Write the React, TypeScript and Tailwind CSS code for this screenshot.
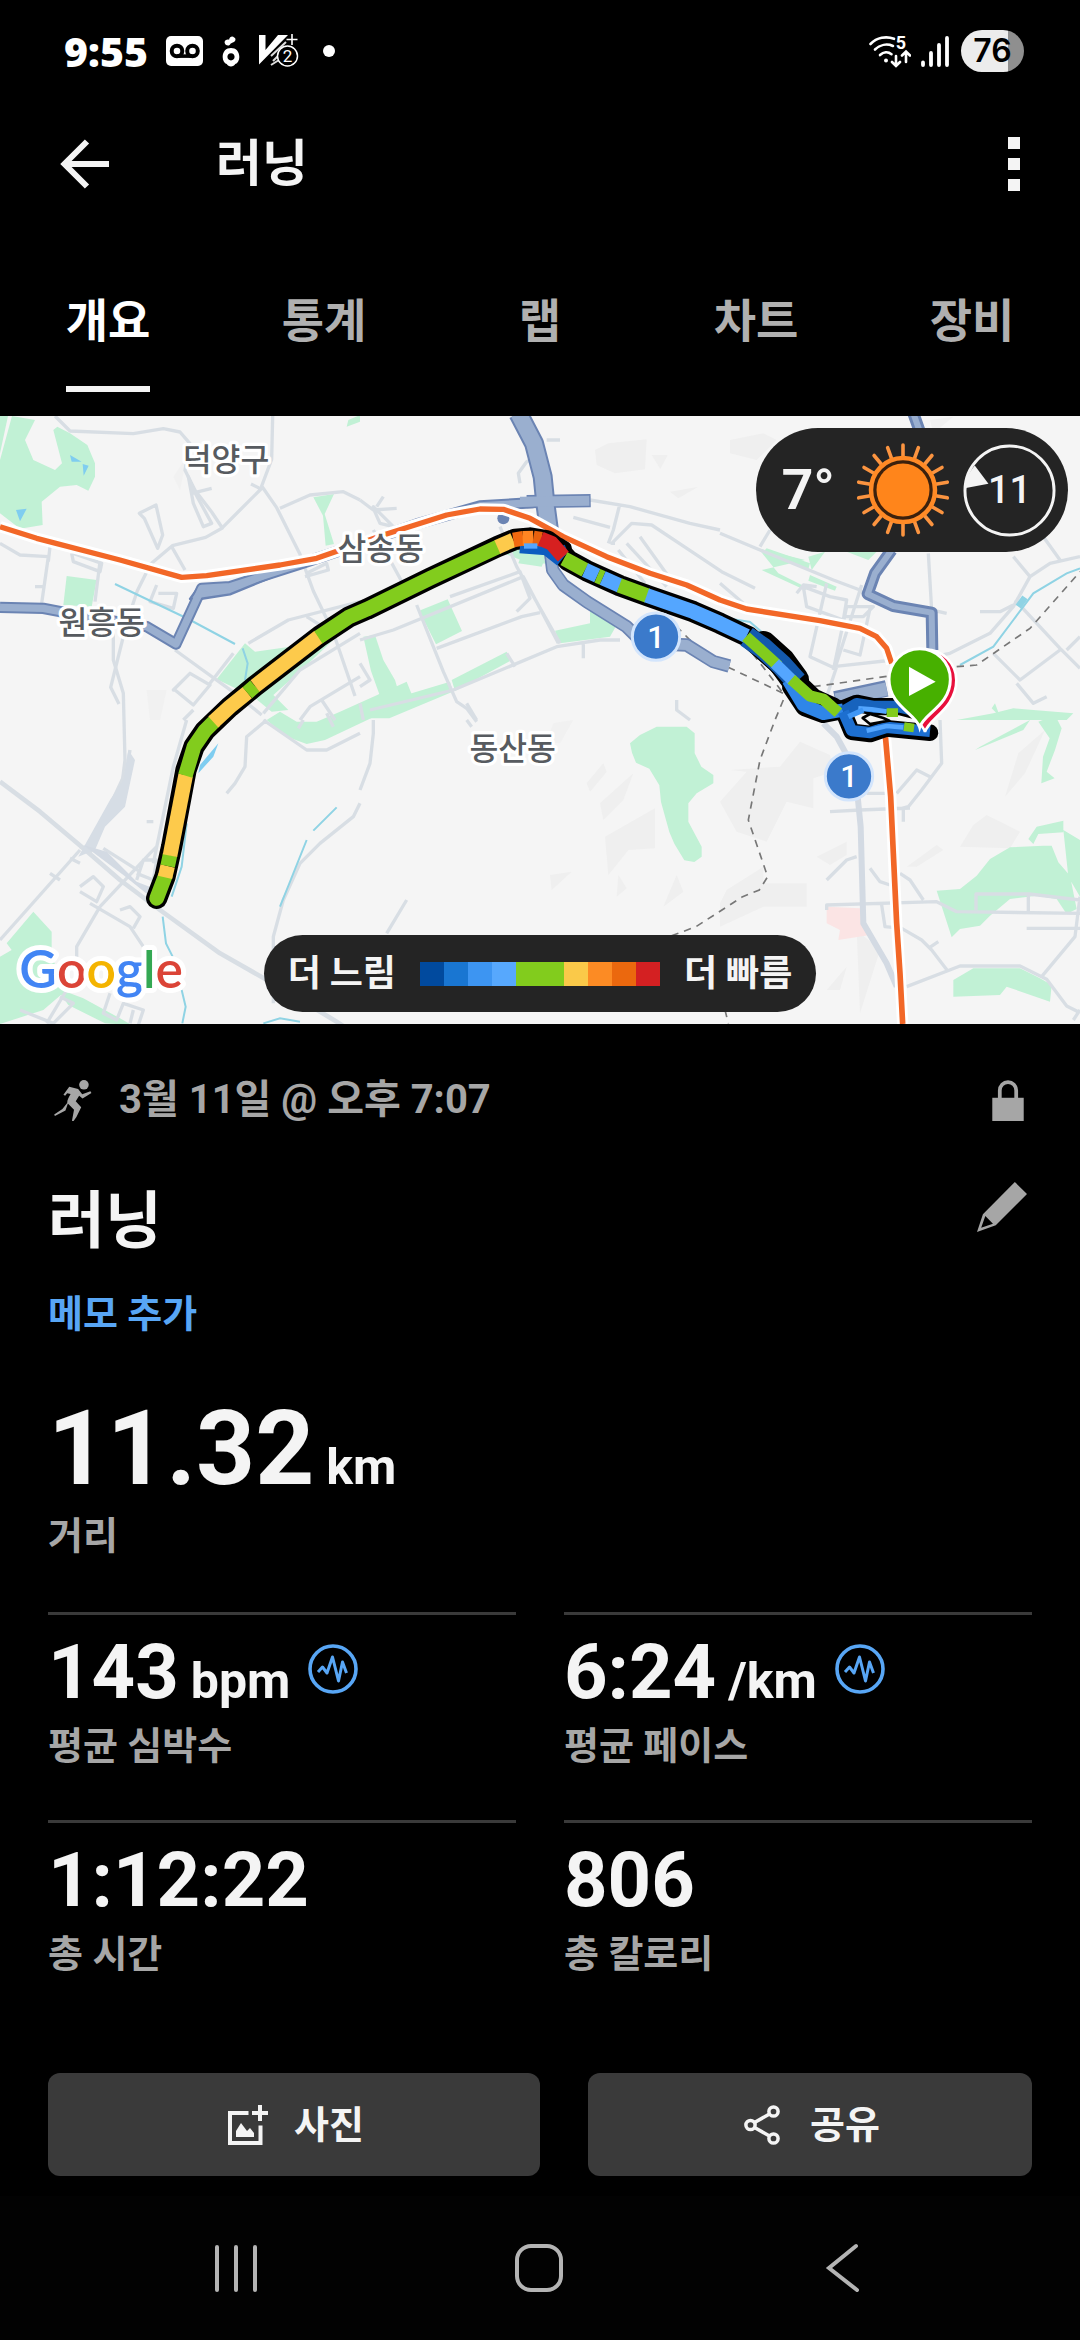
import React from "react";

const FONT = "font-['Roboto','Noto_Sans_CJK_KR',sans-serif]";

/* ---------- status bar ---------- */

function VoicemailIcon() {
  return (
    <svg viewBox="0 0 37 30" className="h-[30px] w-[37px]" aria-hidden="true">
      <rect width="37" height="30" rx="5" fill="#fff" />
      <circle cx="11" cy="15" r="5.3" fill="none" stroke="#000" strokeWidth="4" />
      <circle cx="26.500" cy="15" r="5.300" fill="none" stroke="#000" strokeWidth="4" />
      <path d="M11 20.100h15.500" stroke="#000" strokeWidth="3.600" />
    </svg>
  );
}

function CarrotIcon() {
  return (
    <svg viewBox="0 0 18 32" className="h-[31px] w-[18px]" aria-hidden="true">
      <path d="M2.600 7.600C1.600 4.600 4.600 3 7 3.800 7.600.2 11-.3 12.200 1.600c1.800.8 2 3-.2 4.600-1 .6-2.400 1-3.600 1.800C8 10.600 3.600 10.600 2.600 7.600z" fill="#fff" />
      <path fillRule="evenodd" d="M9 12.500c5 0 8.600 3.500 8.600 9.100 0 3.600-1.800 6.400-4.200 7.400-.8 1.800-2.500 2.500-4.400 2.500s-3.600-.7-4.400-2.500C2.200 28 .4 25.200.4 21.600c0-5.600 3.600-9.100 8.600-9.100zm0 5.300c-2.300 0-3.700 1.600-3.700 3.700s1.400 3.700 3.700 3.700 3.700-1.600 3.700-3.700-1.400-3.700-3.700-3.700z" fill="#fff" />
    </svg>
  );
}

function VaccineIcon() {
  return (
    <svg viewBox="0 0 40 34" className="h-[34px] w-10" aria-hidden="true">
      <path d="M0 1h6.500v15L19 1h10L0 30.500z" fill="#fff" />
      <path d="M12 22l15-14M14 27l8-8M12 31l8-5" stroke="#ddd" strokeWidth="2" />
      <path d="M33 0v11M27.500 5.500h11" stroke="#fff" strokeWidth="1.600" />
      <circle cx="28.500" cy="22" r="10" fill="#000" stroke="#fff" strokeWidth="1.500" />
      <text x="28.500" y="28" textAnchor="middle" fontSize="17" fill="#fff" fontFamily="Roboto, sans-serif">2</text>
    </svg>
  );
}

function WifiIcon() {
  return (
    <svg viewBox="0 -5 42 43" className="h-[43px] w-[42px]" aria-hidden="true">
      <g fill="none" stroke="#fff" strokeWidth="2.600" strokeLinecap="round">
        <path d="M1.500 9C8 2.500 17 .800 25 3.800" />
        <path d="M6 14.500C11 9.600 18 8.400 24 11" />
        <path d="M11 20c3.500-3.200 8-3.600 11.500-.800" />
        <path d="M27 21v9.500M23 27l4 4 4-4M37 27v-9.500M33 20.500l4-4 4 4" />
      </g>
      <circle cx="17" cy="25.500" r="2" fill="#fff" />
      <text x="32" y="13.500" textAnchor="middle" fontSize="18" fontWeight="700" fill="#fff" fontFamily="Roboto, sans-serif">5</text>
    </svg>
  );
}

function StatusBar() {
  return (
    <div className="flex h-[102px] items-center justify-between pl-16 pr-14 text-white">
      <div className="flex items-center">
        <span className="font-['Open_Sans',sans-serif] text-[41px] font-extrabold leading-[48px]">9:55</span>
        <div className="ml-[18px] flex items-center gap-[19px]">
          <VoicemailIcon />
          <CarrotIcon />
          <VaccineIcon />
        </div>
        <span className="ml-6 size-3 rounded-full bg-white" />
      </div>
      <div className="flex items-center gap-[10px]">
        <WifiIcon />
        <svg viewBox="0 0 28 31" className="mr-[2px] h-[31px] w-7" aria-hidden="true">
          <path d="M2 26.500v2.500M10 17v12M18 9v20M26 2v27" stroke="#fff" strokeWidth="3.800" strokeLinecap="round" />
        </svg>
        <span className="flex h-[42px] w-[63px] items-center justify-center rounded-full bg-[linear-gradient(90deg,#ececec_75%,#8f8f8f_75%)] font-['Inter',sans-serif] text-[32px] font-semibold leading-none text-black">
          76
        </span>
      </div>
    </div>
  );
}

/* ---------- header and tabs ---------- */

function Header() {
  return (
    <header className="flex h-[124px] items-center pl-[60px] pr-[50px] text-[#f4f4f4]">
      <button aria-label="뒤로" className="mr-[106px]">
        <svg viewBox="0 0 50 50" className="size-[50px]">
          <path d="M27 2.500L4.500 25 27 47.500M5 25h44" fill="none" stroke="#f4f4f4" strokeWidth="6" />
        </svg>
      </button>
      <h1 className="text-[50px] font-bold leading-[64px]">러닝</h1>
      <button aria-label="더보기" className="ml-auto flex flex-col gap-[9px] px-[10px]">
        <span className="size-3 bg-[#f4f4f4]" />
        <span className="size-3 bg-[#f4f4f4]" />
        <span className="size-3 bg-[#f4f4f4]" />
      </button>
    </header>
  );
}

function Tabs() {
  const tabs = ["개요", "통계", "랩", "차트", "장비"];
  return (
    <nav role="tablist" className="grid grid-cols-5 pb-6 pt-[67px]">
      {tabs.map((tab, i) => (
        <button
          key={tab}
          role="tab"
          aria-selected={i === 0}
          className={
            i === 0
              ? "flex flex-col items-center text-[46px] font-bold leading-[56px] text-white"
              : "flex flex-col items-center text-[46px] font-bold leading-[56px] text-[#b0b0b0]"
          }
        >
          <span className={i === 0 ? "border-b-6 border-[#f4f4f4] pb-[37px]" : "pb-[43px]"}>{tab}</span>
        </button>
      ))}
    </nav>
  );
}

/* ---------- map ---------- */

type Segment = [string, string];

const ROUTE_OUTLINE =
  "M470 1465L495 1400 515 1310 558 1080 582 1010 615 962 690 890 765 828 960 678 1045 622 1100 598 1290 505 1492 410 1545 388 1590 384 1640 392 1672 415 1705 452 1760 482 1860 527 1945 558 2080 605 2160 640 2245 680 2330 755 2385 815 2440 868 2500 895";

const ROUTE: Segment[] = [
  ["#82cc1d", "M470 1465L495 1400"],
  ["#fdca4b", "M495 1402L503 1368"],
  ["#82cc1d", "M503 1368L510 1335"],
  ["#fdca4b", "M510 1337L557 1095"],
  ["#82cc1d", "M556 1097L582 1010 615 962 645 932"],
  ["#fdca4b", "M640 936L690 890 742 848"],
  ["#82cc1d", "M742 848L765 828"],
  ["#fdca4b", "M765 828L957 680"],
  ["#82cc1d", "M955 682L1045 622 1100 598 1290 505 1495 410"],
  ["#fdca4b", "M1492 411L1540 390"],
  ["#f2690f", "M1540 390L1570 385"],
  ["#ff8522", "M1568 385L1600 384"],
  ["#e8610d", "M1600 384L1625 388"],
  ["#d62020", "M1622 386L1655 400 1690 440"],
  ["#82cc1d", "M1692 446L1755 480"],
  ["#54a6ff", "M1755 480L1792 497"],
  ["#82cc1d", "M1792 497L1808 504"],
  ["#54a6ff", "M1808 504L1860 527"],
  ["#82cc1d", "M1858 526L1942 557"],
  ["#54a6ff", "M1940 556L2080 605 2160 640 2240 678"],
];

const TRUNK_WEST = "M0 592L130 595 250 618 440 650 528 702 605 535 690 530 900 462 1080 402 1250 342 1440 288 1600 278";
const TRUNK_NORTH = "M1555 10L1602 100 1628 200 1636 280 1652 400";
const TRUNK_SOUTH = "M1652 430L1658 480 1690 525 1760 575 1880 650 1930 700 2060 705 2140 755 2188 768";
const TRUNK_EAST = "M2740 10L2765 80M2675 420L2625 490 2603 552 2680 588 2795 608 2797 720";

const METRO_WEST =
  "M0 350L110 385 360 450 545 502 620 497 840 465 950 445 1080 400 1150 375 1340 315 1440 297 1510 298 1590 325 1690 380 1820 440 1950 490 2060 525 2160 570 2240 597 2460 632 2580 655 2630 680 2660 715 2675 760";
const METRO_SOUTH = "M2655 965L2672 1160 2680 1330 2690 1540 2700 1690 2708 1842";

function Shield({ x, y }: { x: number; y: number }) {
  return (
    <g>
      <circle cx={x} cy={y} r="71" fill="#3b7acb" stroke="#d3e5fc" strokeWidth="9" />
      <text x={x} y={y + 33} textAnchor="middle" fontSize="92" fontWeight="500" fill="#fff" fontFamily="Roboto, sans-serif">
        1
      </text>
    </g>
  );
}

function PlaceLabel({ x, y, children }: { x: number; y: number; children: string }) {
  return (
    <text x={x} y={y} textAnchor="middle" fontSize="94" fontWeight="500" fill="#575b60" stroke="#fff" strokeWidth="20" strokeLinejoin="round" paintOrder="stroke" fontFamily="'Noto Sans CJK KR', sans-serif">
      {children}
    </text>
  );
}

function MapCanvas() {
  return (
    <svg viewBox="0 18 3240 1824" className="block w-full" role="img" aria-label="러닝 경로 지도">
      <rect y="18" width="3240" height="1824" fill="#f5f5f5" />

      {/* terrain shading */}
      <g fill="#efefef">
        <path d="M1785 120l40-20 115-12-5 90-90 12-55-25z M1955 135h48l-22 42z M2010 245l85-15-60 35z" />
        <path d="M2190 90l100-20 40 20-60 60-80-20z M2790 30l70-10-60 50z" />
        <path d="M1760 1120l50-60 10 25-50 60z M1800 1180l100-90-30 80-60 60z M1815 1280l150-85v120l-80 5-60 75z M1650 1395l65-10-60 55z M1855 1395l25 40-30 25z M2030 1395l20 50-60 45z" />
        <path d="M2190 1080l150-10 60-75 90 40 10 50-60 20v90l-80-20-60 120-90-30-50-90 80-90z M2450 1340l90-45v40l-50 30z M2180 1440l110-70v50h130v70h-130l-130 60v-70z" />
        <path d="M2880 1310l40-65 40-30 100 50-30 50z M3015 1160l40-130 80-70-60 130z M2570 1560l70 60-60 190z M2480 1740l60-70-20 70z M2720 1370l90-65 20 15-80 50z" />
        <path d="M1660 940l60-10-40 70-40-5z M440 840h60l-20 90h-30z M520 200l40-60-20 100z" opacity=".6" />
      </g>

      {/* parks */}
      <g fill="#c1f1d5">
        <path d="M0 18H24L0 130z M36 18L105 30 75 90 100 150 165 180 186 160 160 60 172 50 210 70 262 105 285 160 285 200 265 242 230 225 180 230 125 275 128 345 60 356 0 310V150z" />
        <path d="M200 498l90 12-15 80-85-5z M940 262l62-10-28 60 28 90-25 5-8-90z M1045 30l35-15v20l-40 15z" />
        <path d="M650 808L735 700 765 725 870 710 1085 580 1150 550 1490 400 1600 430 1650 462 1580 457 1490 422 1310 512 1180 572 1090 630 1010 680 910 775 820 855 865 900 815 905 760 860z" />
        <path d="M1565 432h75l-15 38-70-10z M1263 600l80-32 43 95-78 40-50-100z M1355 810l165-85 10 28-165 90z M1090 680l35-5 25 75 35 60 15 50 150-45 8 30-190 80h-60l-15-40 45-32-25-70z M1665 662L1770 640V585L1850 645 1830 680 1680 700z" />
        <path d="M800 930l60 50 60 22 55-12 265-125-20-50-200 90-70 30-60 0-50-30z" />
        <path d="M2275 415l140 35-130 30 130 60 10-5-90-45z M2430 495l80 35-5 12-80-30z M2540 425h90l-25 25z" />
        <path d="M2300 415L2430 460 2425 478 2290 425z M2425 440l50-15-40 55z" />
        <path d="M1890 1000l30-25 50-25h90l24 20 0 60 20 40 36 25v25l-50 30-25 30v55l40 75 0 30-22 16-30-5-30-50-15-35-25-90-5-50-30-50-40-18-12-30z" />
        <path d="M100 1505L155 1565V1640L200 1740 130 1800 0 1842V1640L35 1620 20 1600z M170 1735l80 30 110 60 35 20-80-5-110-55z" />
        <path d="M2980 910L3040 895 3100 900 3220 910 3200 930H2870z M2940 1010l150-80-20 30-145 60z M3115 935l50-20 20 40-20 65-25 65 24 20-40 15 5-80 20-55z" />
        <path d="M2810 1442l70-5 50-40 40-50 60-35 100-5 25 0 20 50 35 40 20 100-30 15-30-45-60-10-80 10-60 50-30 30-60 10-25 25z M3110 1250l80-18v35l-75 5-15 30-15-15z M3190 1260l50 30v170l-35-60z" />
        <path d="M2860 1710l60-35h140l60 30 35 20-5 50-130-45-20 25-140 5z M2975 895l10-15 15 40z" />
      </g>
      <path d="M2480 1490l100 5 30 80-95 15 5-30-40-20z" fill="#fbe4e4" />

      {/* local roads */}
      <g fill="none" stroke="#d8dee4" strokeWidth="10" strokeLinejoin="round">
        <path d="M165 18l45 45 190 8 90-15 50 10 30 35-15 80 30 60 50 65 32 48-50 28-100 25-65 55-40 80-30 90-30 120-20 80 25 50" />
        <path d="M818 18l-3 130-30 80 45 65 70 140 40 110 60 125 65 190 M668 352l115-115-30-15 M565 200l15 80 30 70 25-10-60-110z M575 250l60-15 M840 295l90-40 100-10 50 25" />
        <path d="M418 310l50-25 20 90-15 40-40-90z M0 400l60 35 85 5-20 140 M150 410l-5 45 M215 430l5 25 80 30 5-25-85-30 M300 455l-15 120 M105 530h30 M515 410l40 70 M475 550l55 0-10 45-70-20 20-50" />
        <path d="M745 700l120-70 215-55 M525 720l180 130 80 65 M520 840l50-50 60 35-50 60-55-45z M630 820l70-90 M580 900l-30 30 M340 670l0 80 30 100 5 200-15 120-100 145 M1080 670L900 780 790 910 M900 930l30-40 150-90 M965 870l40 60 M920 620l40 25 M915 500l70-20-5-20-60 30" />
        <path d="M1080 690l100-30 390-160 105 200 M1080 880l10 50 M1250 585l80 200 40 90 30 20 30 40 M1310 715l255-95 55-12 M1350 560l210-75 30 80-40 40 M1500 350l50 120 130 230 M1230 560l-60-110-50-90 M1080 270l40 30 70-5 M1120 290l60 60-40-10-20-45z M1150 260l-20 30 M1560 220l-5-30 25-35 40-20 M1640 90l40 0 M1080 760l30 50-30 20" />
        <path d="M1110 900l250-60 310-130 130-20 60 0 M1750 700v45 M1520 730l25 40 M1400 880l30 50 M1860 280l-20 80-15 40 M1720 322l110 30 M1845 400l-10 0 60-60 60 5 120 80 90 60 100 50 M1880 400l120 130 M1855 420l80 100 M1920 380l100 140 M2030 870v30l40 30 M1770 270l120 20 180 50 90 20" />
        <path d="M2160 370l120 50 220 90 80 30 10 10 M2160 520l70 60 M2310 360l-30 50 M2410 530l80 30 50 10-10 60-110-40z M2480 520l-50 220 75 35 80-250 M2390 550l20-25 40 5 M2500 780l40-190 80 0-30 30-60 0 M2500 770l180-20 M2530 720l50 15 30-140 M2510 770l-30 90 M2785 430l10 170 45 10 M3040 440l50 60-50 90-70 80-120 60-50 10 M3130 380l50 70 M2940 605l60 0 40-20 M3090 500l60 -40 90-20 M3045 570l135 145 60 60 M3180 720l-120 90-80-80 M3050 820l50 60 40-20 M3240 680l-40 40" />
        <path d="M0 1115l120 90 130 110 110 95 120 90 180 130 150 85 200 120 60 40" strokeWidth="14" />
        <path d="M240 1310l30 20 40-100 70-150 10-60 M560 930l-40 140-60 290 M0 1590l240-270 M240 1430l40-30 30 30-20 45-50-30 M150 1390l30 20 M210 1345l30 15 M310 1315l110 70 M300 1490l150-160 20-20 M270 1480l120 70 40 60 M360 1500l30-10 30 30-20 35 M410 1410l20-60 40 0-10 60-50-20 M300 1490l-70 120 0 40 M440 1235l20 0 M800 930l-60 50-5 90-30 50-25 30 M1080 1180l-20 40-100 80-60 60-50 110-30 110v200 M790 930l130 90 60 0 100-50 M910 930l-15 25 M980 910l20 40 M1120 930l0 40-10 90-30 80 M1220 1470l-60 100 M1400 930l15 20" />
        <path d="M200 1740l-60 100 M60 1800l100 40 60-60-40-20 M330 1750l-20 60 40 20 20-50 60 20-20 60 M400 1800l-10 40 M2820 930l5 130-60 80-40 50-20 5 M2490 1205l90-5 150-6 M2600 1150l60 0 M2690 1150l60-70 40 20 M2710 1195l0 40 M2570 1340l-30 10-60 60 M2610 1375l30 40 30 10 M2700 1390l30 20 40 60 M2480 1500l0-15 330-10 60 30 370 5 M2928 1500v-48l160 0 152 18 M3085 1455v50 M3240 1460l-15 120-100 120 M3080 1555h160 M2645 1485l10 65 50 5 60 35 30 30 50 65 M2785 1615l30-20 M2720 1730l160-62 180 0 80 40 60 80 40 20 M3220 1830l20-30" />
      </g>
      <path d="M2470 940L2510 980 2565 1080 2582 1250 2590 1540 2660 1660 2690 1730" fill="none" stroke="#d3dae3" strokeWidth="18" />
      <path d="M330 1170l40-60 15-90 20 30-30 140-60 60-30 70-50 20z" fill="#d6dde5" />
      <path d="M250 1305l120 90 100 80-10-40-50-20-90-90z" fill="#d3dae3" />

      {/* water */}
      <g fill="none" stroke="#8fd3e4" strokeWidth="6">
        <path d="M345 522l220 105 140 75 M728 715l15 45-8 50" />
        <path d="M1010 1192l-70 70 M920 1290l-60 150-20 50 M488 1520l10 80 20 40 M545 1740l12 50-10 50 M560 1240l-15 130-30 90 M790 1840l50-15 60 10" />
        <path d="M1900 530l90 20 90 35 80 25 40 18 50 8 35 30 40 65 60 50 30 60 50 5 M2880 765l100-55 60-80 60-80 100-60 40-15" />
        <path d="M3055 590l20-28" strokeWidth="20" />
      </g>
      <path d="M210 135l35 20-30 0z M248 162l18 5-15 30z M48 300l32-4-20 38z M600 1065l55-65-15 40-45 50z" fill="#7fcdf0" />

      {/* administrative borders */}
      <g fill="none" stroke="#777" strokeWidth="5" strokeDasharray="22 18">
        <path d="M2000 620l70 70 90 70 200 95 M2170 650l80 70 100 130 M2350 870l-25 60-45 120-35 180 58 170-25 40-50 20-140 90-80 30 M2440 830l250-35 M2870 770l60-5 160-110 150-170" />
        <path d="M2175 1800l10 40" />
      </g>

      {/* trunk roads */}
      <g fill="none" strokeLinejoin="round">
        <g stroke="#6b84b3">
          <path d={TRUNK_WEST} strokeWidth="34" />
          <path d={TRUNK_NORTH} strokeWidth="60" />
          <path d="M1580 275L1772 272" strokeWidth="40" />
          <path d={TRUNK_SOUTH} strokeWidth="40" />
          <path d={TRUNK_EAST} strokeWidth="36" />
          <path d="M2505 868L2660 835" strokeWidth="50" />
        </g>
        <path d="M600 525h80l260-75 60-10-120 35-190 78-90 14-30 0z" fill="#9aafcf" stroke="#6b84b3" strokeWidth="7" />
        <g stroke="#9aafcf">
          <path d={TRUNK_WEST} strokeWidth="22" />
          <path d={TRUNK_NORTH} strokeWidth="48" />
          <path d="M1560 275L1768 272" strokeWidth="30" />
          <path d={TRUNK_SOUTH} strokeWidth="30" />
          <path d={TRUNK_EAST} strokeWidth="18" />
          <path d="M2508 870L2660 837" strokeWidth="40" />
        </g>
        <circle cx="1510" cy="325" r="18" fill="#6b84b3" />
      </g>

      {/* metro line */}
      <g fill="none" strokeLinejoin="round">
        <path d={METRO_WEST} stroke="#fff" strokeWidth="34" />
        <path d={METRO_SOUTH} stroke="#fff" strokeWidth="34" />
        <path d={METRO_WEST} stroke="#f26727" strokeWidth="16" />
        <path d={METRO_SOUTH} stroke="#f26727" strokeWidth="17" />
      </g>

      {/* recorded route */}
      <g fill="none" strokeLinejoin="round" strokeLinecap="round" stroke="#000">
        <path d={ROUTE_OUTLINE} strokeWidth="64" />
        <path d="M1682 402L1698 412 1700 445" strokeWidth="34" />
        <path d="M2290 705L2345 755 2385 810" strokeWidth="84" />
        <path d="M2375 830L2415 890 2470 910 2520 900" strokeWidth="58" />
        <path d="M2520 900L2570 880 2620 890 2700 890 2740 900" strokeWidth="52" />
        <path d="M2530 905L2555 965 2610 972 2660 955 2790 968" strokeWidth="50" />
      </g>
      <g fill="none" strokeLinejoin="round">
        <path d="M1560 408l80 6 45 35" stroke="#0b5cc0" strokeWidth="44" />
        <path d="M1684 408l10 26" stroke="#0a4a9e" strokeWidth="22" />
        <path d="M2240 680L2290 715 2345 765 2390 815" stroke="#1459ad" strokeWidth="64" />
        <path d="M2365 810L2410 885 2470 910 2530 900" stroke="#2f86e8" strokeWidth="40" />
        <path d="M2530 905L2570 882 2620 890 2700 890 2740 900" stroke="#1763bd" strokeWidth="36" />
        <path d="M2530 905L2555 962 2610 968 2660 952 2790 964" stroke="#1d6fd0" strokeWidth="34" />
        <path d="M2575 895L2615 898 2660 905 M2600 962L2660 948 2710 952" stroke="#54a6ff" strokeWidth="14" />
        <path d="M2545 920L2590 900" stroke="#3f96f5" strokeWidth="16" />
        {ROUTE.map(([color, d], i) => (
          <path key={i} d={d} stroke={color} strokeWidth="44" strokeLinecap={i === 0 ? "round" : "butt"} />
        ))}
        <path d="M2238 680L2285 722 2335 768" stroke="#82cc1d" strokeWidth="34" />
        <path d="M2325 760L2378 812" stroke="#54a6ff" strokeWidth="34" />
        <path d="M2374 808L2430 858 2470 868 2515 908" stroke="#82cc1d" strokeWidth="34" />
        <path d="M2660 908l34 0 M2712 950l30 4" stroke="#82cc1d" strokeWidth="26" />
        <path d="M1572 408l40 0" stroke="#54a6ff" strokeWidth="16" />
        <path d="M2588 924L2610 912 2650 924 2668 932 2610 942z" fill="#f5f5f5" stroke="#000" strokeWidth="8" />
      </g>

      <Shield x={1968} y={680} />
      <Shield x={2547} y={1099} />

      {/* finish and start pins */}
      <path d="M2775 966c-10-40-90-70-90-155a92 92 0 0 1 184 0c0 85-84 115-94 155z" fill="#e8103c" stroke="#fff" strokeWidth="8" />
      <path d="M2759 952c-12-42-92-64-92-144a92 92 0 0 1 184 0c0 80-80 102-92 144z" fill="#47b000" stroke="#fff" strokeWidth="9" />
      <path d="M2727 770v88l80-43z" fill="#fff" />

      <PlaceLabel x={678} y={183}>덕양구</PlaceLabel>
      <PlaceLabel x={1142} y={450}>삼송동</PlaceLabel>
      <PlaceLabel x={305} y={671}>원흥동</PlaceLabel>
      <PlaceLabel x={1538} y={1050}>동산동</PlaceLabel>

      <text x="58" y="1735" fontSize="155" fontWeight="600" fontFamily="Lato, sans-serif" stroke="#fff" strokeWidth="30" strokeLinejoin="round" paintOrder="stroke">
        <tspan fill="#4285f4">G</tspan>
        <tspan fill="#db4437">o</tspan>
        <tspan fill="#f4b400">o</tspan>
        <tspan fill="#4285f4">g</tspan>
        <tspan fill="#34a853">l</tspan>
        <tspan fill="#db4437">e</tspan>
      </text>
    </svg>
  );
}

function SunIcon() {
  const rays = Array.from({ length: 18 }, (_, i) => i * 20);
  return (
    <svg viewBox="-48 -48 96 96" className="size-24" role="img" aria-label="맑음">
      {rays.map((a) => (
        <path key={a} d="M0-33V-45" transform={`rotate(${a})`} stroke="#fb9440" strokeWidth="3.600" strokeLinecap="round" />
      ))}
      <circle r="32" fill="#3c210d" stroke="#ff8a26" strokeWidth="4.500" />
      <circle r="26.500" fill="#ff851b" />
    </svg>
  );
}

function WeatherPill() {
  return (
    <div className="absolute right-3 top-3 flex h-[124px] items-center rounded-full bg-[#242424] pl-[25px] pr-3">
      <span className="mr-[20px] text-[56px] font-semibold leading-[64px] text-[#f4f4f4]">7°</span>
      <SunIcon />
      <div className="relative ml-3 flex size-[93px] items-center justify-center">
        <svg viewBox="0 0 95 95" className="absolute inset-0 size-full" aria-hidden="true">
          <circle cx="47.500" cy="47.500" r="45.500" fill="none" stroke="#f4f4f4" strokeWidth="3" />
          <path d="M12 22l14 18.500L3 45c0-9 3-16 9-23z" fill="#f4f4f4" />
        </svg>
        <span className="text-[38px] font-medium leading-[44px] text-[#f4f4f4]">11</span>
      </div>
    </div>
  );
}

function PaceLegend() {
  return (
    <div className="absolute inset-x-0 bottom-3 flex justify-center">
      <div className="flex h-[77px] items-center gap-6 rounded-full bg-[#242424] px-6 text-[36px] font-bold leading-[48px] text-[#f4f4f4]">
        <span>더 느림</span>
        <div className="flex h-6">
          <span className="w-6 bg-[#014a9e]" />
          <span className="w-6 bg-[#1976d2]" />
          <span className="w-6 bg-[#3d95f2]" />
          <span className="w-6 bg-[#57a8fd]" />
          <span className="w-12 bg-[#82cc1d]" />
          <span className="w-6 bg-[#fac949]" />
          <span className="w-6 bg-[#fc8b24]" />
          <span className="w-6 bg-[#eb680e]" />
          <span className="w-6 bg-[#d42022]" />
        </div>
        <span>더 빠름</span>
      </div>
    </div>
  );
}

/* ---------- activity details ---------- */

function RunnerIcon() {
  return (
    <svg viewBox="0 0 110 120" className="h-[41px] w-[38px]" aria-hidden="true">
      <circle cx="87" cy="14" r="14" fill="#a6a6a6" />
      <path d="M44 20l26 6 12 16 24-9 3 5-26 16-10-8-10 16 16 18-14 28-9 13-4-2 6-32-18-18-7 20L2 105l-2-4 24-16 14-18c0-8 4-16 10-26l-10-2-6 7-5-3z" fill="#a6a6a6" />
    </svg>
  );
}

function PulseButton({ label }: { label: string }) {
  return (
    <button aria-label={label} className="ml-[18px] mt-[16px] self-start">
      <svg viewBox="0 0 50 50" className="size-[50px]" fill="none" stroke="#58a6f5">
        <circle cx="25" cy="25" r="23" strokeWidth="3.600" />
        <path d="M10 28l4.500-5 4.500 6 5.500-16 6 24 4-19 4 11" strokeWidth="3" strokeLinejoin="round" />
      </svg>
    </button>
  );
}

function Stat({ value, unit, label, pulse }: { value: string; unit?: string; label: string; pulse?: boolean }) {
  return (
    <div className="border-t-3 border-[#3a3a3a] pt-[13px]">
      <div className="flex h-[90px] items-baseline">
        <span className="text-[76px] font-bold leading-[88px] text-[#f4f4f4]">{value}</span>
        {unit && <span className="ml-[12px] text-[50px] font-bold leading-[60px] text-[#f4f4f4]">{unit}</span>}
        {pulse && <PulseButton label={label + " 정보"} />}
      </div>
      <p className="text-[38px] font-bold leading-[56px] text-[#a6a6a6]">{label}</p>
    </div>
  );
}

function Details() {
  return (
    <main className="px-12 pt-12">
      <div className="flex h-14 items-center">
        <div className="flex w-[71px] pl-[6px]">
          <RunnerIcon />
        </div>
        <p className="text-[40px] font-bold leading-[56px] text-[#a6a6a6]">3월 11일 @ 오후 7:07</p>
        <button aria-label="비공개" className="ml-auto mr-2">
          <svg viewBox="0 0 92 120" className="h-[41px] w-8">
            <path d="M0 52h92v68H0z" fill="#a6a6a6" />
            <path d="M22 56V31a24 25 0 0 1 48 0V56" fill="none" stroke="#a6a6a6" strokeWidth="11" />
          </svg>
        </button>
      </div>

      <div className="mt-[54px] flex h-20 items-start justify-between">
        <h2 className="text-[62px] font-bold leading-[80px] text-[#f4f4f4]">러닝</h2>
        <button aria-label="이름 편집" className="mr-[5px]">
          <svg viewBox="0 0 144 150" className="h-[50px] w-[50px]" preserveAspectRatio="none">
            <path fillRule="evenodd" d="M109 0l35 36-90 94L0 150l17-53zM24 102L12 137l34-12z" fill="#a6a6a6" />
          </svg>
        </button>
      </div>

      <button className="mt-6 block text-[38px] font-bold leading-[56px] text-[#58a6f5]">메모 추가</button>

      <div className="mt-[51px] flex h-28 items-baseline">
        <span className="text-[103px] font-bold leading-[112px] text-[#f4f4f4]">11.32</span>
        <span className="ml-[12px] text-[50px] font-bold leading-[60px] text-[#f4f4f4]">km</span>
      </div>
      <p className="mt-[3px] text-[38px] font-bold leading-[56px] text-[#a6a6a6]">거리</p>

      <div className="mt-12 grid grid-cols-2 gap-x-12 gap-y-[46px]">
        <Stat value="143" unit="bpm" label="평균 심박수" pulse />
        <Stat value="6:24" unit="/km" label="평균 페이스" pulse />
        <Stat value="1:12:22" label="총 시간" />
        <Stat value="806" label="총 칼로리" />
      </div>
    </main>
  );
}

function Actions() {
  return (
    <div className="mt-[91px] grid grid-cols-2 text-[38px] font-bold leading-[56px] text-[#f4f4f4]">
      <div className="flex pl-12">
        <button className="flex h-[103px] flex-1 items-center justify-center gap-[26px] rounded-xl bg-[#3a3a3a] pl-1">
          <svg viewBox="0 0 40 40" className="size-10" aria-hidden="true">
            <path d="M20.500 8H2v30h30.500V20.500" fill="none" stroke="#f4f4f4" strokeWidth="4" />
            <path d="M32 0v16M24 8h16" stroke="#f4f4f4" strokeWidth="4" />
            <path d="M8 32v-6l5-8 6 8 3-3 4 5v4z" fill="#f4f4f4" />
          </svg>
          사진
        </button>
      </div>
      <div className="flex px-12">
        <button className="flex h-[103px] flex-1 items-center justify-center gap-[30px] rounded-xl bg-[#3a3a3a] pl-1">
          <svg viewBox="0 0 36 40" className="h-10 w-9" fill="none" stroke="#f4f4f4" strokeWidth="3.500" aria-hidden="true">
            <circle cx="6.500" cy="20" r="4.600" />
            <circle cx="29.500" cy="6.500" r="4.600" />
            <circle cx="29.500" cy="33.500" r="4.600" />
            <path d="M10.500 17.500l15-8.500M10.500 22.500l15 8.500" />
          </svg>
          공유
        </button>
      </div>
    </div>
  );
}

function SystemNav() {
  return (
    <nav className="mt-5 flex h-36 items-center justify-center gap-[252px] bg-[#020202]">
      <button aria-label="최근 앱">
        <svg viewBox="0 0 50 50" className="size-[50px]">
          <path d="M4 4v43M23 4v43M42 4v43" stroke="#b4b4b4" strokeWidth="4" strokeLinecap="round" />
        </svg>
      </button>
      <button aria-label="홈">
        <svg viewBox="0 0 50 50" className="size-[50px]">
          <rect x="2" y="3" width="44" height="44" rx="14" fill="none" stroke="#b4b4b4" strokeWidth="4" />
        </svg>
      </button>
      <button aria-label="뒤로 가기">
        <svg viewBox="0 0 50 50" className="size-[50px]">
          <path d="M39 3L12 25l28 22" fill="none" stroke="#b4b4b4" strokeWidth="4" strokeLinecap="round" />
        </svg>
      </button>
    </nav>
  );
}

export default function App() {
  return (
    <div className={`min-h-screen bg-black ${FONT}`}>
      <StatusBar />
      <Header />
      <Tabs />
      <section className="relative overflow-hidden">
        <MapCanvas />
        <WeatherPill />
        <PaceLegend />
      </section>
      <Details />
      <Actions />
      <SystemNav />
    </div>
  );
}
